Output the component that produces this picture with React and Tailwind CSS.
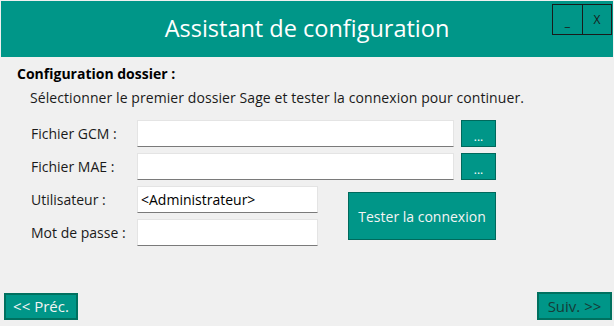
import React from 'react';

const font = { fontFamily: '"Open Sans", "Noto Sans", sans-serif' };

const Field = ({ label, value, wide, browse }) => (
  <div className="flex items-center h-[27px]">
    <span className="w-[106px] text-[14px] text-[#1a1a1a] leading-none">{label}</span>
    <div
      className={`h-[27px] bg-white border border-[#e4e4e4] border-b-[#7a7a7a] flex items-center pl-[3px] text-[14px] text-black ${
        wide ? 'w-[317px]' : 'w-[181px]'
      }`}
    >
      {value}
    </div>
    {browse && (
      <button className="ml-[7px] w-[35px] h-[27px] bg-[#009688] border border-[#00695c] text-white text-[12px] leading-none pt-[6px]">
        ...
      </button>
    )}
  </div>
);

export default function App() {
  return (
    <div style={font} className="w-[614px] h-[326px] bg-[#f0f0f0] flex flex-col pt-[1px] px-[1px] overflow-hidden">
      <div className="relative h-[56px] bg-[#009688] flex items-center justify-center">
        <h1 className="text-white text-[23.5px] leading-none pb-[1px]">Assistant de configuration</h1>
        <div className="absolute right-[1px] top-[3px] flex border border-[#1a1a1a] h-[31px]">
          <span className="w-[29px] flex items-end justify-center pb-[6px] text-[12px] leading-none text-[#1a1a1a]">_</span>
          <span className="w-[29px] border-l border-[#1a1a1a] flex items-center justify-center text-[12px] leading-none text-[#1a1a1a]">X</span>
        </div>
      </div>

      <div className="flex-1 flex flex-col">
        <h2 className="mt-[8px] ml-[16px] text-[14px] font-bold text-black leading-[18px]">Configuration dossier :</h2>
        <p className="mt-[6px] ml-[29px] text-[14px] text-[#1a1a1a] leading-[18px] tracking-[0.08px]">
          Sélectionner le premier dossier Sage et tester la connexion pour continuer.
        </p>

        <div className="mt-[13px] ml-[30px] flex flex-col gap-[6px]">
          <Field label="Fichier GCM :" wide browse />
          <Field label="Fichier MAE :" wide browse />
          <div className="flex items-start">
            <div className="flex flex-col gap-[6px]">
              <Field label="Utilisateur :" value="<Administrateur>" />
              <Field label="Mot de passe :" />
            </div>
            <button className="ml-[30px] mt-[6px] w-[148px] h-[48px] bg-[#009688] border border-[#00695c] text-[#f4f4f4] text-[14px]">
              Tester la connexion
            </button>
          </div>
        </div>
      </div>

      <div className="flex justify-between items-end pb-[6px] pl-[3px] pr-[1px]">
        <button className="w-[74px] h-[27px] bg-[#009688] border-2 border-[#00705f] text-[#f4f4f4] text-[15px] leading-none">
          &lt;&lt; Préc.
        </button>
        <button className="w-[75px] h-[28px] bg-[#009688] border-2 border-[#00705f] text-[#163c37] text-[15px] leading-none">
          Suiv. &gt;&gt;
        </button>
      </div>
    </div>
  );
}
